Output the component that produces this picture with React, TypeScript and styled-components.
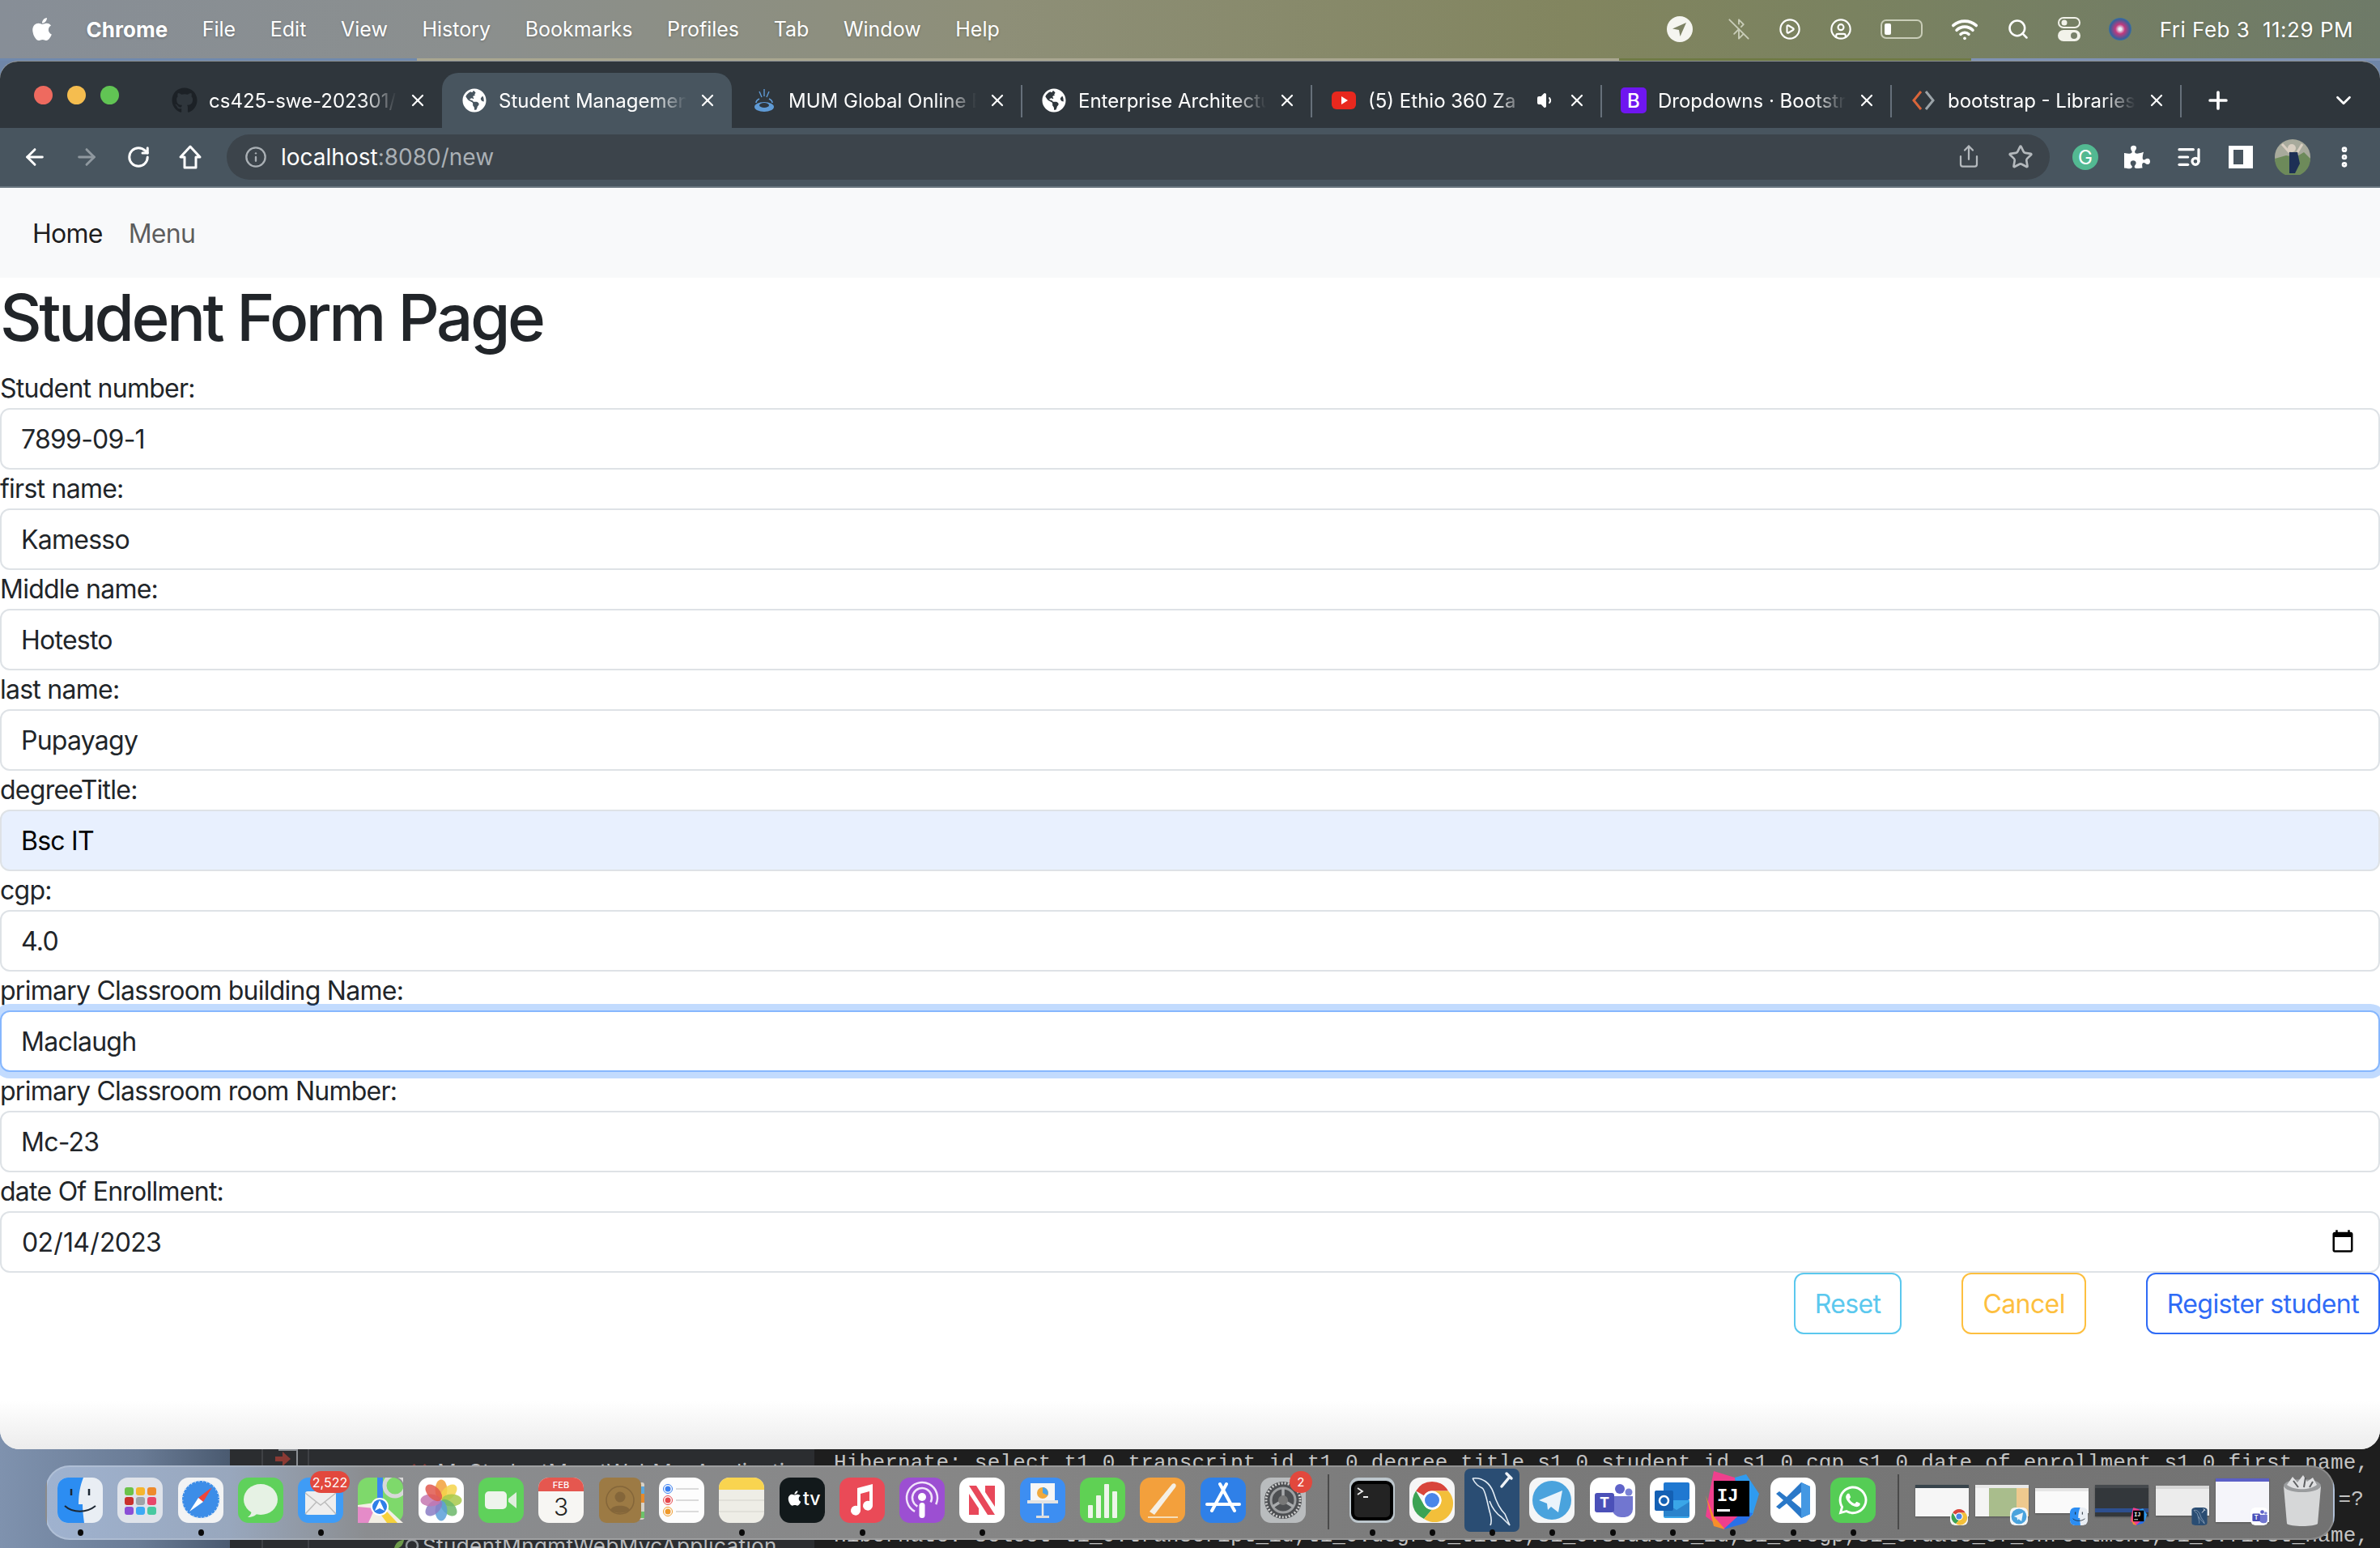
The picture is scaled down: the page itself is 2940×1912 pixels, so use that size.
import React from "react";
import styled, { createGlobalStyle } from "styled-components";
import {
  ArrowLeft,
  ArrowRight,
  BluetoothOff,
  ChevronDown,
  CirclePlay,
  CircleUser,
  Info,
  ListMusic,
  MoreVertical,
  Plus,
  RotateCw,
  Search,
  Share,
  Star,
  Volume1,
  Wifi,
  X,
} from "lucide-react";
import { FaApple, FaGithub, FaGlobeAmericas, FaPuzzlePiece, FaWhatsapp } from "react-icons/fa";

const GlobalStyle = createGlobalStyle`
  html, body { margin: 0; padding: 0; background: #6f86a8; }
  * { box-sizing: border-box; }
`;

const sans = `Inter, "Liberation Sans", sans-serif`;

const App = () => (
  <Screen>
    <GlobalStyle />
    <MenuBar>
      <AppleSlot><FaApple size={32} /></AppleSlot>
      <MenuItem $bold>Chrome</MenuItem>
      {["File", "Edit", "View", "History", "Bookmarks", "Profiles", "Tab", "Window", "Help"].map((m) => (
        <MenuItem key={m}>{m}</MenuItem>
      ))}
      <StatusArea>
        <LocationBadge>
          <svg width="20" height="20" viewBox="0 0 20 20"><path d="M18 2 1 9.500l8 1.500 1.500 8z" fill="#7d8264" /></svg>
        </LocationBadge>
        <BluetoothOff size={28} color="#c9cdb8" strokeWidth={1.6} />
        <CirclePlay size={28} strokeWidth={1.8} />
        <CircleUser size={28} strokeWidth={1.8} />
        <BatteryShell><BatteryLevel /></BatteryShell>
        <Wifi size={34} strokeWidth={2.6} />
        <Search size={28} strokeWidth={2.2} />
        <svg width="28" height="30" viewBox="0 0 28 30">
          <rect x="1" y="1" width="26" height="12" rx="6" fill="none" stroke="#f2f2ea" strokeWidth="2" />
          <circle cx="8" cy="7" r="3.500" fill="#f2f2ea" />
          <rect y="16" width="28" height="14" rx="7" fill="#f2f2ea" />
          <circle cx="20" cy="23" r="4" fill="#78806a" />
        </svg>
        <Siri />
        <ClockText>Fri Feb 3&nbsp;&nbsp;11:29 PM</ClockText>
      </StatusArea>
    </MenuBar>
    <WallpaperSliver />
    <BrowserWindow>
      <TabStrip>
        <Lights>
          <Light $c="#ee6a5f" />
          <Light $c="#f5bd4f" />
          <Light $c="#61c454" />
        </Lights>
        {tabs.map((t, i) => (
          <Tab key={t.title} $active={i === 1} $sep={i > 1}>
            <Favicon>{t.icon}</Favicon>
            <TabTitle>{t.title}</TabTitle>
            {t.audio && <Volume1 size={24} fill="#fff" color="#fff" />}
            <X size={24} color="#fff" strokeWidth={2.2} />
          </Tab>
        ))}
        <NewTab><Plus size={34} strokeWidth={2.6} /></NewTab>
        <TabListButton><ChevronDown size={30} strokeWidth={2.2} /></TabListButton>
      </TabStrip>
      <Toolbar>
        <ToolButton><ArrowLeft size={32} strokeWidth={2.2} /></ToolButton>
        <ToolButton $dim><ArrowRight size={32} strokeWidth={2.2} /></ToolButton>
        <ToolButton><RotateCw size={30} strokeWidth={2.4} /></ToolButton>
        <ToolButton>
          <svg width="30" height="32" viewBox="0 0 30 32" fill="none" stroke="#fff" strokeWidth="3">
            <path d="M15 3 3 16h5v13h14V16h5z" strokeLinejoin="round" />
          </svg>
        </ToolButton>
        <Omnibox>
          <Info size={28} color="#aab0b5" strokeWidth={2} />
          <UrlText>localhost<UrlRest>:8080/new</UrlRest></UrlText>
          <OmniActions>
            <OmniAction><Share size={30} strokeWidth={1.8} /></OmniAction>
            <OmniAction><Star size={32} strokeWidth={2} /></OmniAction>
          </OmniActions>
        </Omnibox>
        <ToolButton>
          <GrammarlyBadge>G</GrammarlyBadge>
        </ToolButton>
        <ToolButton><FaPuzzlePiece size={32} /></ToolButton>
        <ToolButton><ListMusic size={32} strokeWidth={2.4} /></ToolButton>
        <ToolButton><SidePanelIcon /></ToolButton>
        <ToolButton>
          <svg width="44" height="44" viewBox="0 0 44 44">
            <circle cx="22" cy="22" r="22" fill="#a8aa9c" />
            <path d="M0 24a22 22 0 0 0 44 0l-8-8-10 6-12-2z" fill="#6d8a5a" />
            <path d="M18 16h10l3 14-6 12h-7z" fill="#1d2f55" />
            <circle cx="21" cy="11" r="5" fill="#d9cfc2" />
            <path d="M18 16 9 6M28 16l6-10" stroke="#d9cfc2" strokeWidth="3" />
          </svg>
        </ToolButton>
        <ToolButton><MoreVertical size={32} strokeWidth={3} /></ToolButton>
      </Toolbar>
      <Page>
        <NavBar>
          <NavLink $active>Home</NavLink>
          <NavLink>Menu</NavLink>
        </NavBar>
        <Heading>Student Form Page</Heading>
        <form>
          {fields.map((f) => (
            <div key={f.label}>
              <FieldLabel>{f.label}</FieldLabel>
              <FieldInput
                type={f.type ?? "text"}
                defaultValue={f.value}
                $autofill={f.autofill}
                $focused={f.focused}
              />
            </div>
          ))}
          <ButtonRow>
            <OutlineButton type="button" $c="#5bc8ee">Reset</OutlineButton>
            <OutlineButton type="button" $c="#fdbf3f">Cancel</OutlineButton>
            <OutlineButton type="button" $c="#2f6bf6">Register student</OutlineButton>
          </ButtonRow>
        </form>
      </Page>
    </BrowserWindow>
    <Desktop>
      <WallpaperPanel />
      <IdePanel>
        <IdeGutter />
        <IdeGutter $wide>
          <svg width="32" height="44" viewBox="0 0 32 44" fill="none">
            <path d="M6 1h23v42H6" stroke="#8b8f94" strokeWidth="2" />
            <path d="M2 9h9V3l10 9-10 9v-6H2z" fill="#8a3a34" />
          </svg>
        </IdeGutter>
        <IdeTree>
          <IdeRow $top><RedCross>✗</RedCross>MyStudentMgmtWebMvcApplication</IdeRow>
          <IdeRow>
            <svg width="32" height="22" viewBox="0 0 32 22" fill="none">
              <path d="M1 14c2-8 8-10 12-10-1 6-5 12-12 10z" fill="#6d9a4a" />
              <circle cx="23" cy="11" r="7" stroke="#8f9498" strokeWidth="2.500" />
            </svg>
            StudentMngmtWebMvcApplication
          </IdeRow>
        </IdeTree>
      </IdePanel>
      <Terminal>
        <TerminalLine>{sqlLine}</TerminalLine>
        <TerminalLine $right>=?</TerminalLine>
        <TerminalLine>{sqlLine}</TerminalLine>
      </Terminal>
    </Desktop>
    <Dock>
      {dockApps.map((a) => (
        <DockSlot key={a.name} title={a.name}>
          {a.icon}
          {a.badge && <DockBadge $wide={a.badge.length > 1}>{a.badge}</DockBadge>}
          {a.dot && <RunDot />}
        </DockSlot>
      ))}
      <DockDivider />
      {dockRunning.map((a) => (
        <DockSlot key={a.name} title={a.name}>
          {a.icon}
          <RunDot />
        </DockSlot>
      ))}
      <DockDivider />
      {thumbs.map((t) => (
        <DockSlot key={t.name} title={t.name}>
          <Thumb $bg={t.bg} $bar={t.bar} $h={t.h} />
          <ThumbBadge>{t.icon}</ThumbBadge>
        </DockSlot>
      ))}
      <DockSlot title="Trash"><TrashIcon /></DockSlot>
    </Dock>
  </Screen>
);

export default App;

/* ---- drawings ---- */

const Tile = ({ bg, children }: { bg: string; children?: React.ReactNode }) => (
  <svg width="56" height="56" viewBox="0 0 56 56">
    <rect width="56" height="56" rx="13" fill={bg} />
    {children}
  </svg>
);

const FinderIcon = () => (
  <Tile bg="#e9eef4">
    <path d="M13 0h19c-4 10-6 20-6 33h5c0 8 1 15 2 23H13A13 13 0 0 1 0 43V13A13 13 0 0 1 13 0z" fill="#2c8df2" />
    <path d="M9 35c10 9 27 9 38 0" stroke="#1c2733" strokeWidth="2" fill="none" />
    <path d="M17 14v8M39 14v8" stroke="#1c2733" strokeWidth="2.500" />
  </Tile>
);

const LaunchpadIcon = () => (
  <Tile bg="#dfe3ea">
    {["#6cc24a", "#f5b52e", "#ee8a2c", "#c9302c", "#9ea3a8", "#e8476a", "#8b4fd6", "#3da9f5", "#48c9a0"].map((c, i) => (
      <rect key={c} x={9 + (i % 3) * 14} y={12 + Math.floor(i / 3) * 12} width="11" height="10" rx="3" fill={c} />
    ))}
  </Tile>
);

const SafariIcon = () => (
  <Tile bg="#f2f3f4">
    <circle cx="28" cy="27" r="23" fill="#3c8de8" />
    <circle cx="28" cy="27" r="23" fill="none" stroke="#dfe9f5" strokeDasharray="1 4" strokeWidth="3" />
    <path d="M42 12 25 25l6 5z" fill="#f0453a" />
    <path d="M14 42l17-12-6-5z" fill="#fff" />
  </Tile>
);

const MessagesIcon = () => (
  <Tile bg="#5fd15b">
    <ellipse cx="28" cy="27" rx="21" ry="19" fill="#e6f2e4" />
    <path d="M17 40c0 4-2 7-5 9 5 0 10-2 12-5z" fill="#e6f2e4" />
  </Tile>
);

const MailIcon = () => (
  <Tile bg="#3f9cf6">
    <rect x="9" y="17" width="38" height="29" rx="3" fill="#eeeeee" />
    <path d="M9 19 28 34 47 19M9 45l14-15M47 45 33 30" stroke="#bcbcbc" strokeWidth="1.500" fill="none" />
  </Tile>
);

const MapsIcon = () => (
  <Tile bg="#7ed96b">
    <path d="M0 34 28 30 56 56H30L0 56z" fill="#f3efe5" />
    <path d="M0 36v20h13l8-18z" fill="#e58bc8" />
    <path d="M27 44l9 12h13l-13-14z" fill="#f6d23c" />
    <path d="M24 0h7v28h-7z" fill="#3a86f2" />
    <circle cx="46" cy="10" r="13" fill="none" stroke="#d8d8d8" strokeWidth="5" />
    <circle cx="27" cy="36" r="11" fill="#fff" />
    <circle cx="27" cy="36" r="9" fill="#2f7fe8" />
    <path d="M27 28l6 13-6-3-6 3z" fill="#fff" />
  </Tile>
);

const PhotosIcon = () => (
  <Tile bg="#ffffff">
    {["#f2a13a", "#f5d34a", "#a8c94a", "#6cb76a", "#5b9fd8", "#8a7cc4", "#c477b0", "#e0584e"].map((c, i) => (
      <ellipse key={c} cx="28" cy="15" rx="7.500" ry="12.500" fill={c} opacity=".85" transform={`rotate(${i * 45} 28 28)`} />
    ))}
  </Tile>
);

const FaceTimeIcon = () => (
  <Tile bg="#5fd15b">
    <rect x="8" y="17" width="27" height="22" rx="5" fill="#eef4ec" />
    <path d="M37 26l10-8v20l-10-8z" fill="#dfeedd" />
  </Tile>
);

const CalendarIcon = () => (
  <Tile bg="#f7f6f3">
    <path d="M0 17V13A13 13 0 0 1 13 0h30a13 13 0 0 1 13 13v4z" fill="#e5574f" />
    <text x="28" y="13" textAnchor="middle" fontSize="11" fontFamily={sans} fill="#fff" fontWeight="500">FEB</text>
    <text x="28" y="47" textAnchor="middle" fontSize="30" fontFamily={sans} fill="#222" fontWeight="300">3</text>
  </Tile>
);

const ContactsIcon = () => (
  <svg width="56" height="56" viewBox="0 0 56 56">
    <rect x="46" y="6" width="10" height="46" rx="3" fill="#d8d2c8" />
    <rect x="50" y="20" width="6" height="11" fill="#e58a2d" />
    <rect x="50" y="11" width="6" height="9" fill="#5ba6dd" />
    <rect x="50" y="42" width="6" height="8" fill="#6cc36a" />
    <rect width="52" height="56" rx="9" fill="#9c7a44" />
    <circle cx="26" cy="28" r="17" fill="none" stroke="#84663a" strokeWidth="1.500" />
    <circle cx="26" cy="24" r="6.500" fill="#84663a" />
    <path d="M14 40c3-7 21-7 24 0-6 5-18 5-24 0z" fill="#84663a" />
  </svg>
);

const RemindersIcon = () => (
  <Tile bg="#fdfdfd">
    {["#3a7ff0", "#e5484d", "#ef9a2b"].map((c, i) => (
      <g key={c}>
        <circle cx="11" cy={14 + i * 14} r="3.500" fill={c} />
        <circle cx="11" cy={14 + i * 14} r="5.500" fill="none" stroke={c} />
        <path d={`M21 ${14 + i * 14}h28`} stroke="#cfcfcf" strokeWidth="1.500" />
      </g>
    ))}
  </Tile>
);

const NotesIcon = () => (
  <Tile bg="#eeede6">
    <path d="M0 15V13A13 13 0 0 1 13 0h30a13 13 0 0 1 13 13v2z" fill="#f9d44f" />
    <path d="M0 28h56M0 42h56" stroke="#dddcd5" strokeWidth="1.500" />
  </Tile>
);

const TvIcon = () => (
  <Tile bg="#12191b">
    <FaApple x="8" y="15" size={21} color="#fff" />
    <text x="29" y="34" fontSize="23" fontFamily={sans} fill="#fff" fontWeight="500">tv</text>
  </Tile>
);

const MusicIcon = () => (
  <Tile bg="#ea4a57">
    <path d="M22 13 41 8v27a6 6 0 1 1-4-6V17l-11 3v21a6 6 0 1 1-4-6z" fill="#fff" />
  </Tile>
);

const PodcastsIcon = () => (
  <Tile bg="#9c4fd2">
    <circle cx="28" cy="25" r="19" fill="none" stroke="#f2e5fb" strokeWidth="2.500" strokeDasharray="88 32" transform="rotate(118 28 25)" />
    <circle cx="28" cy="25" r="12" fill="none" stroke="#f2e5fb" strokeWidth="2.500" strokeDasharray="56 20" transform="rotate(118 28 25)" />
    <circle cx="28" cy="24" r="5" fill="#fff" />
    <rect x="24.500" y="31" width="7" height="19" rx="3.500" fill="#fff" />
  </Tile>
);

const NewsIcon = () => (
  <Tile bg="#ffffff">
    <path d="M12 10h9l23 36H35zM12 20l12 18v8H12zM32 10h12v26L32 18z" fill="#e8485a" />
  </Tile>
);

const KeynoteIcon = () => (
  <Tile bg="#3d8ef2">
    <rect x="13" y="7" width="30" height="24" fill="#f6f6f6" />
    <circle cx="28" cy="19" r="7" fill="#f0a93b" />
    <path d="M28 19V12a7 7 0 0 1 6 10z" fill="#4aa3e8" />
    <rect x="9" y="28" width="38" height="4" fill="#e3e3e3" />
    <path d="M28 32v16" stroke="#eaeaea" strokeWidth="2.500" />
    <rect x="20" y="47" width="16" height="3" fill="#dcdcdc" />
  </Tile>
);

const NumbersIcon = () => (
  <Tile bg="#5fd154">
    {[[10, 34], [20, 22], [30, 8], [40, 17]].map(([x, y]) => (
      <rect key={x} x={x} y={y} width="6" height={50 - y} rx="1" fill="#eef5ea" />
    ))}
  </Tile>
);

const PagesIcon = () => (
  <Tile bg="#f3a03c">
    <path d="M12 42 40 8c3-2 6 1 4 4L18 46z" fill="#f5efe4" />
    <path d="M10 49h37" stroke="#f6ddb7" strokeWidth="2" />
  </Tile>
);

const AppStoreIcon = () => (
  <Tile bg="#2f80e8">
    <path d="M24 8l18 33M32 8 14 41M8 33h40" stroke="#fff" strokeWidth="4" strokeLinecap="round" />
  </Tile>
);

const SettingsIcon = () => (
  <Tile bg="#b9bcbe">
    <circle cx="28" cy="28" r="23" fill="#4d4f52" />
    <circle cx="28" cy="28" r="21" fill="none" stroke="#d0d0d0" strokeWidth="3" strokeDasharray="2 2" />
    <circle cx="28" cy="28" r="15" fill="none" stroke="#9ea0a2" strokeWidth="3" />
    <path d="M28 28V13M28 28l13 8M28 28l-13 8" stroke="#a9abad" strokeWidth="3.500" />
    <circle cx="28" cy="28" r="6" fill="#777" />
  </Tile>
);

const TerminalIcon = () => (
  <svg width="56" height="56" viewBox="0 0 56 56">
    <rect width="56" height="56" rx="11" fill="#bcc6cc" />
    <rect x="2" y="4" width="52" height="49" rx="9" fill="#000" />
    <rect x="6" y="8" width="44" height="41" rx="5" fill="#232323" />
    <path d="M10 13l6 4-6 4M17 24h6" stroke="#eee" strokeWidth="1.800" fill="none" />
  </svg>
);

const ChromeIcon = () => (
  <Tile bg="#f6f6f6">
    <path d="M8.100 16.500A23 23 0 0 1 48 16.500H28a11.500 11.500 0 0 0-10 5.750z" fill="#d8453b" />
    <path d="M8.100 16.500 18 33.750A11.500 11.500 0 0 0 28 39.500L18 51A23 23 0 0 1 8.100 16.500z" fill="#3ca354" />
    <path d="M48 16.500A23 23 0 0 1 18 51L28 39.500a11.500 11.500 0 0 0 10-17.250l-10-5.750z" fill="#f3bf3a" />
    <circle cx="28" cy="28" r="11.500" fill="#fff" />
    <circle cx="28" cy="28" r="9" fill="#4a86e8" />
  </Tile>
);

const MysqlIcon = () => (
  <MysqlSvg width="68" height="78" viewBox="0 0 68 78">
    <rect width="68" height="78" rx="7" fill="#2a4d73" />
    <path
      d="M10 12c12-2 22 6 26 18 3 10 8 20 14 26l6 14-10-10c-6-4-12-12-15-20M10 12c4 8 8 10 12 12s6 18 10 32c1 4 2 10 0 14"
      fill="none"
      stroke="#e4edf5"
      strokeWidth="1.600"
    />
    <path d="M46 22l10-12M52 6l6 6" stroke="#f0f3f6" strokeWidth="3.500" strokeLinecap="round" />
  </MysqlSvg>
);

const TelegramIcon = () => (
  <Tile bg="#f4f6f7">
    <circle cx="28" cy="28" r="24" fill="#4aa3dd" />
    <path d="M12 28 41 16l-5 27-9-7-4 4-1-8z" fill="#eaf4fb" />
  </Tile>
);

const TeamsIcon = () => (
  <Tile bg="#ffffff">
    <circle cx="37" cy="14" r="6" fill="#5f63c9" />
    <circle cx="48" cy="18" r="4.500" fill="#7b83d6" />
    <path d="M27 23h26v16a10 10 0 0 1-10 10h-4a12 12 0 0 1-12-12z" fill="#7176d0" />
    <rect x="6" y="19" width="24" height="24" rx="3" fill="#4b50b8" />
    <text x="18" y="37" textAnchor="middle" fontSize="18" fontWeight="700" fontFamily={sans} fill="#fff">T</text>
  </Tile>
);

const OutlookIcon = () => (
  <Tile bg="#ffffff">
    <rect x="17" y="6" width="32" height="22" rx="2" fill="#1f78d1" />
    <path d="M17 28h32v20a2 2 0 0 1-2 2H19a2 2 0 0 1-2-2z" fill="#3aa6e8" />
    <path d="M17 30l16 10 16-10v18H17z" fill="#1b5fb0" opacity=".5" />
    <rect x="6" y="16" width="23" height="25" rx="2" fill="#1460b4" />
    <circle cx="17.500" cy="28.500" r="5.500" fill="none" stroke="#fff" strokeWidth="2.500" />
  </Tile>
);

const IdeaIcon = () => (
  <IdeaSvg width="66" height="72" viewBox="0 0 66 72">
    <path d="M10 0l26 8 10 50-24 14L0 56 4 30z" fill="#ef3f8d" />
    <path d="M36 8 50 4l16 24-8 26-12 10z" fill="#2f9bf0" />
    <path d="M0 30l10 26 14 16-14-4z" fill="#f78f2b" />
    <path d="M22 72l28-8 8-12-12-2z" fill="#2970e8" />
    <rect x="10" y="12" width="44" height="44" fill="#000" />
    <text x="14" y="37" fontSize="22" fontWeight="700" fontFamily={`"Liberation Mono", monospace`} fill="#fff">IJ</text>
    <rect x="14" y="47" width="16" height="3" fill="#fff" />
  </IdeaSvg>
);

const VsCodeIcon = () => (
  <Tile bg="#ffffff">
    <path d="M38 6 20 24l-9-7-4 3 9 8-9 8 4 3 9-7 18 18 11-5V11z" fill="#2a78c8" />
    <path d="M38 6l11 5v34l-11 5z" fill="#4498e3" />
    <path d="M38 18 26 28l12 10z" fill="#fff" />
  </Tile>
);

const WhatsappIcon = () => (
  <Tile bg="#55cd55">
    <FaWhatsapp x="8" y="8" size={40} color="#fff" />
  </Tile>
);

const TrashIcon = () => (
  <TrashSvg width="50" height="64" viewBox="0 0 50 64">
    <path d="M2 14h46l-4 46c-4 4-34 4-38 0z" fill="#d6d7d8" />
    <ellipse cx="25" cy="13" rx="23" ry="8" fill="#9a9c9e" />
    <path d="M6 12l7-10 6 7 7-9 5 8 7-5 5 9c-9 7-28 7-37 0z" fill="#dfe0e2" />
    <path d="M14 7l6 8M29 3l-2 12M38 8l-4 7" stroke="#5d5f61" strokeWidth="2" />
  </TrashSvg>
);

const SidePanelIcon = () => (
  <svg width="30" height="32" viewBox="0 0 30 32">
    <rect x="0" y="2" width="30" height="28" fill="#fff" />
    <rect x="6" y="7" width="12" height="18" fill="#48555f" />
  </svg>
);

const tabs = [
  { title: "cs425-swe-202301/", icon: <FaGithub size={32} color="#1c2126" /> },
  { title: "Student Managemen", icon: <FaGlobeAmericas size={30} color="#fff" /> },
  {
    title: "MUM Global Online E",
    icon: (
      <svg width="32" height="32" viewBox="0 0 32 32" fill="none">
        <path d="M16 2v9M10 5l3 7M22 5l-3 7" stroke="#5f9bd6" strokeWidth="1.400" />
        <ellipse cx="16" cy="24" rx="12" ry="6" fill="#5f9bd6" />
        <ellipse cx="16" cy="22" rx="6" ry="3" fill="#2f363d" />
        <path d="M6 19c0-2 2-4 4-5M26 19c0-2-2-4-4-5" stroke="#5f9bd6" strokeWidth="1.600" />
      </svg>
    ),
  },
  { title: "Enterprise Architectu", icon: <FaGlobeAmericas size={30} color="#fff" /> },
  {
    title: "(5) Ethio 360 Za",
    audio: true,
    icon: (
      <svg width="32" height="32" viewBox="0 0 32 32">
        <rect x="1" y="5" width="30" height="22" rx="6" fill="#e8281e" />
        <path d="M13 11l8 5-8 5z" fill="#fff" />
      </svg>
    ),
  },
  {
    title: "Dropdowns · Bootstr",
    icon: (
      <svg width="32" height="32" viewBox="0 0 32 32">
        <rect width="32" height="32" rx="5" fill="#6f16f0" />
        <text x="16" y="25" textAnchor="middle" fontSize="24" fontFamily={sans} fontWeight="500" fill="#fff">B</text>
      </svg>
    ),
  },
  {
    title: "bootstrap - Libraries",
    icon: (
      <svg width="32" height="32" viewBox="0 0 32 32" fill="none" strokeWidth="3">
        <path d="M13 5 4 16l9 11" stroke="#d9653a" />
        <path d="M19 5l9 11-9 11" stroke="#9ba3a8" />
      </svg>
    ),
  },
];

const fields: { label: string; value: string; type?: string; autofill?: boolean; focused?: boolean }[] = [
  { label: "Student number:", value: "7899-09-1" },
  { label: "first name:", value: "Kamesso" },
  { label: "Middle name:", value: "Hotesto" },
  { label: "last name:", value: "Pupayagy" },
  { label: "degreeTitle:", value: "Bsc IT", autofill: true },
  { label: "cgp:", value: "4.0" },
  { label: "primary Classroom building Name:", value: "Maclaugh", focused: true },
  { label: "primary Classroom room Number:", value: "Mc-23" },
  { label: "date Of Enrollment:", value: "2023-02-14", type: "date" },
];

const sqlLine =
  "Hibernate: select t1_0.transcript_id,t1_0.degree_title,s1_0.student_id,s1_0.cgp,s1_0.date_of_enrollment,s1_0.first_name,";

const dockApps: { name: string; icon: React.ReactNode; dot?: boolean; badge?: string }[] = [
  { name: "Finder", icon: <FinderIcon />, dot: true },
  { name: "Launchpad", icon: <LaunchpadIcon /> },
  { name: "Safari", icon: <SafariIcon />, dot: true },
  { name: "Messages", icon: <MessagesIcon /> },
  { name: "Mail", icon: <MailIcon />, dot: true, badge: "2,522" },
  { name: "Maps", icon: <MapsIcon /> },
  { name: "Photos", icon: <PhotosIcon /> },
  { name: "FaceTime", icon: <FaceTimeIcon /> },
  { name: "Calendar", icon: <CalendarIcon /> },
  { name: "Contacts", icon: <ContactsIcon /> },
  { name: "Reminders", icon: <RemindersIcon /> },
  { name: "Notes", icon: <NotesIcon />, dot: true },
  { name: "TV", icon: <TvIcon /> },
  { name: "Music", icon: <MusicIcon />, dot: true },
  { name: "Podcasts", icon: <PodcastsIcon /> },
  { name: "News", icon: <NewsIcon />, dot: true },
  { name: "Keynote", icon: <KeynoteIcon /> },
  { name: "Numbers", icon: <NumbersIcon /> },
  { name: "Pages", icon: <PagesIcon /> },
  { name: "App Store", icon: <AppStoreIcon /> },
  { name: "System Preferences", icon: <SettingsIcon />, badge: "2" },
];

const dockRunning = [
  { name: "Terminal", icon: <TerminalIcon /> },
  { name: "Chrome", icon: <ChromeIcon /> },
  { name: "MySQL Workbench", icon: <MysqlIcon /> },
  { name: "Telegram", icon: <TelegramIcon /> },
  { name: "Teams", icon: <TeamsIcon /> },
  { name: "Outlook", icon: <OutlookIcon /> },
  { name: "IntelliJ IDEA", icon: <IdeaIcon /> },
  { name: "VS Code", icon: <VsCodeIcon /> },
  { name: "WhatsApp", icon: <WhatsappIcon /> },
];

const thumbs = [
  { name: "Chrome window", bg: "#f6f6f6", bar: "#38444c", h: 39, icon: <ChromeIcon /> },
  { name: "Telegram window", bg: "linear-gradient(90deg, #f4f4f4 0 26%, #a9bd8c 26% 78%, #eec98e 78%)", bar: "#e8e8e8", h: 39, icon: <TelegramIcon /> },
  { name: "Finder window", bg: "#fafafa", bar: "#e6e6e6", h: 31, icon: <FinderIcon /> },
  { name: "IntelliJ window", bg: "linear-gradient(#33373b 0 72%, #2d4f8f 72% 86%, #33373b 86%)", bar: "#45494d", h: 39, icon: <IdeaIcon /> },
  { name: "Workbench window", bg: "#ececec", bar: "#d6d6d6", h: 37, icon: <MysqlIcon /> },
  { name: "Teams window", bg: "#f5f5fa", bar: "#5b5fc7", h: 54, icon: <TeamsIcon /> },
];

/* ---- screen ---- */

const Screen = styled.div`
  position: relative;
  width: 2940px;
  height: 1912px;
  overflow: hidden;
  background: #6f86a8;
  font-family: ${sans};
`;

const MenuBar = styled.header`
  display: flex;
  align-items: center;
  gap: 42.6px;
  height: 72px;
  padding: 0 33px 0 36px;
  color: #fff;
  font-size: 25px;
  background: linear-gradient(90deg, #878e97 0%, #8b8f8e 20%, #8e8f78 42%, #82855f 66%, #7a8260 78%, #6e7a68 100%);
  text-shadow: 0 1px 3px rgba(0, 0, 0, 0.25);
`;

const AppleSlot = styled.span`
  display: flex;
  width: 32px;
  margin-right: -4px;
`;

const MenuItem = styled.span<{ $bold?: boolean }>`
  font-size: ${(p) => (p.$bold ? "26px" : "25px")};
  font-weight: ${(p) => (p.$bold ? 700 : 400)};
  white-space: nowrap;
`;

const StatusArea = styled.div`
  display: flex;
  align-items: center;
  gap: 35px;
  margin-left: auto;
`;

const LocationBadge = styled.span`
  display: flex;
  align-items: center;
  justify-content: center;
  width: 32px;
  height: 32px;
  margin-right: 8px;
  border-radius: 50%;
  background: #f5f5f0;
`;

const BatteryShell = styled.span`
  display: flex;
  align-items: center;
  width: 52px;
  height: 24px;
  padding: 3px;
  border: 2px solid #c9cdb8;
  border-radius: 7px;
`;

const BatteryLevel = styled.span`
  width: 8px;
  height: 100%;
  border-radius: 2px;
  background: #fff;
`;

const Siri = styled.span`
  display: block;
  width: 28px;
  height: 28px;
  border-radius: 50%;
  background: radial-gradient(circle at 50% 50%, #e8eef5 0 8%, #c0397e 30%, #3a5f9a 62%, #3fb5b0 100%);
`;

const ClockText = styled.span`
  font-size: 26px;
  letter-spacing: 0.5px;
  white-space: nowrap;
`;

const WallpaperSliver = styled.div`
  height: 3px;
  background: linear-gradient(
    90deg,
    #7089ad 0 515px,
    #a9a690 515px 2000px,
    #6f7a45 2000px 2435px,
    #7f92b4 2435px 100%
  );
`;

const BrowserWindow = styled.main`
  position: relative;
  z-index: 1;
  display: flex;
  flex-direction: column;
  height: 1715px;
  border-top: 1px solid #8b9093;
  border-radius: 22px 22px 24px 24px;
  overflow: hidden;
  background: #fff;
`;

const TabStrip = styled.div`
  display: flex;
  align-items: flex-end;
  flex: none;
  height: 82px;
  background: #2f363c;
`;

const Lights = styled.div`
  display: flex;
  align-self: flex-start;
  gap: 18px;
  width: 188px;
  padding: 30px 0 0 42px;
`;

const Light = styled.span<{ $c: string }>`
  width: 23px;
  height: 23px;
  border-radius: 50%;
  background: ${(p) => p.$c};
`;

const Tab = styled.div<{ $active?: boolean; $sep?: boolean }>`
  position: relative;
  display: flex;
  flex: none;
  align-items: center;
  gap: 14px;
  width: 358px;
  height: 68px;
  padding: 0 18px 0 24px;
  border-radius: 20px 20px 0 0;
  color: #fff;
  font-size: 24px;
  background: ${(p) => (p.$active ? "#48555f" : "transparent")};

  &::after {
    content: "";
    display: ${(p) => (p.$sep ? "block" : "none")};
    position: absolute;
    right: -1px;
    top: 15px;
    width: 2px;
    height: 40px;
    background: #66707a;
  }
`;

const Favicon = styled.span`
  display: flex;
  align-items: center;
  justify-content: center;
  flex: none;
  width: 32px;
  height: 32px;
`;

const TabTitle = styled.span`
  flex: 1;
  min-width: 0;
  overflow: hidden;
  white-space: nowrap;
  -webkit-mask-image: linear-gradient(90deg, #000 82%, transparent 100%);
  mask-image: linear-gradient(90deg, #000 82%, transparent 100%);
`;

const NewTab = styled.span`
  display: flex;
  align-items: center;
  justify-content: center;
  align-self: center;
  width: 60px;
  margin: 14px 0 0 16px;
  color: #fff;
`;

const TabListButton = styled.span`
  display: flex;
  align-self: center;
  margin: 14px 30px 0 auto;
  color: #fff;
`;

const Toolbar = styled.div`
  display: flex;
  flex: none;
  align-items: center;
  height: 74px;
  padding: 0 12px 0 11px;
  border-bottom: 2px solid #6a7680;
  background: #48555f;
`;

const ToolButton = styled.span<{ $dim?: boolean }>`
  display: flex;
  flex: none;
  align-items: center;
  justify-content: center;
  width: 64px;
  color: ${(p) => (p.$dim ? "#8f989f" : "#fff")};
`;

const Omnibox = styled.div`
  display: flex;
  flex: 1;
  align-items: center;
  gap: 17px;
  height: 56px;
  margin: 0 12px 0 13px;
  padding: 0 16px 0 22px;
  border-radius: 28px;
  background: #3c444b;
`;

const UrlText = styled.span`
  color: #fff;
  font-size: 28px;
`;

const UrlRest = styled.span`
  color: #aab0b5;
`;

const OmniActions = styled.div`
  display: flex;
  gap: 24px;
  margin-left: auto;
`;

const OmniAction = styled.span`
  display: flex;
  justify-content: center;
  width: 40px;
  color: #b4b9bd;
`;

const GrammarlyBadge = styled.span`
  display: flex;
  align-items: center;
  justify-content: center;
  width: 32px;
  height: 32px;
  border-radius: 50%;
  color: #fff;
  font-size: 24px;
  background: #53b992;
`;

/* ---- page ---- */

const Page = styled.div`
  flex: 1;
  color: #212529;
  font-size: 32px;
  line-height: 48px;
  letter-spacing: -0.75px;
  background: linear-gradient(180deg, #fff calc(100% - 60px), #ececec 100%);
`;

const NavBar = styled.nav`
  display: flex;
  align-items: center;
  gap: 32px;
  height: 111px;
  padding: 2px 40px 0;
  background: #f8f9fa;
`;

const NavLink = styled.a<{ $active?: boolean }>`
  color: ${(p) => (p.$active ? "rgba(0, 0, 0, 0.9)" : "rgba(0, 0, 0, 0.65)")};
`;

const Heading = styled.h1`
  margin: 0 0 15px;
  font-size: 80px;
  font-weight: 500;
  line-height: 98px;
  letter-spacing: -3.5px;
`;

const FieldLabel = styled.label`
  display: block;
  height: 48px;
`;

const FieldInput = styled.input<{ $autofill?: boolean; $focused?: boolean }>`
  display: block;
  position: relative;
  z-index: ${(p) => (p.$focused ? 1 : 0)};
  width: 100%;
  height: 76px;
  padding: 12px 24px;
  border: 2px solid ${(p) => (p.$focused ? "#86b7fe" : "#dee2e6")};
  border-radius: 12px;
  outline: none;
  color: ${(p) => (p.$autofill ? "#000" : "#212529")};
  font-family: ${sans};
  font-size: 32px;
  letter-spacing: -0.75px;
  background: ${(p) => (p.$autofill ? "#e8f0fe" : "#fff")};
  box-shadow: ${(p) => (p.$focused ? "0 0 0 8px rgba(13, 110, 253, 0.25)" : "none")};

  &::-webkit-calendar-picker-indicator {
    width: 32px;
    height: 32px;
    margin-right: 4px;
    padding: 0;
  }
`;

const ButtonRow = styled.div`
  display: flex;
  justify-content: flex-end;
  gap: 74px;
`;

const OutlineButton = styled.button<{ $c: string }>`
  height: 76px;
  padding: 0 24px;
  border: 2px solid ${(p) => p.$c};
  border-radius: 12px;
  color: ${(p) => p.$c};
  font-family: ${sans};
  font-size: 32px;
  letter-spacing: -0.6px;
  background: transparent;
`;

/* ---- desktop behind the window ---- */

const Desktop = styled.div`
  display: flex;
  height: 152px;
  margin-top: -30px;
`;

const WallpaperPanel = styled.div`
  flex: none;
  width: 284px;
  background: linear-gradient(90deg, #7f92ae 0%, #6a7c96 60%, #4a5a70 100%);
`;

const IdePanel = styled.div`
  display: flex;
  flex: none;
  width: 722px;
  background: #2b2d30;
`;

const IdeGutter = styled.div<{ $wide?: boolean }>`
  flex: none;
  width: ${(p) => (p.$wide ? "57px" : "41px")};
  padding-top: 30px;
  border-right: 2px solid #3f4145;

  svg {
    display: block;
    margin-left: 13px;
  }
`;

const IdeTree = styled.div`
  flex: 1;
  padding: 35px 0 0 140px;
  color: #b8babc;
  font-size: 26px;
  letter-spacing: 0.4px;
  white-space: nowrap;

  svg {
    flex: none;
    margin-left: -36px;
    margin-right: 4px;
  }
`;

const IdeRow = styled.div<{ $top?: boolean }>`
  display: flex;
  align-items: center;
  height: 44px;
  margin-bottom: ${(p) => (p.$top ? "48px" : "0")};
`;

const RedCross = styled.span`
  margin: 0 6px 0 -20px;
  color: #8a3a34;
  font-size: 36px;
  font-weight: 700;
`;

const Terminal = styled.div`
  flex: 1;
  min-width: 0;
  padding: 25px 0 0 24px;
  overflow: hidden;
  background: #1e1e1e;
`;

const TerminalLine = styled.div<{ $right?: boolean }>`
  height: 45px;
  padding-right: ${(p) => (p.$right ? "20px" : "0")};
  color: #c4c4c4;
  font-family: "Liberation Mono", monospace;
  font-size: 26px;
  line-height: 45px;
  letter-spacing: 0.2px;
  text-align: ${(p) => (p.$right ? "right" : "left")};
  white-space: nowrap;
`;

/* ---- dock ---- */

const Dock = styled.footer`
  position: absolute;
  z-index: 2;
  left: 56px;
  right: 56px;
  bottom: 10px;
  display: flex;
  align-items: flex-start;
  gap: 18.3px;
  height: 92px;
  padding: 13px 0 0 13px;
  border: 2px solid rgba(255, 255, 255, 0.18);
  border-radius: 30px;
  background: linear-gradient(90deg, #9fb2cf 0%, #98a7bd 8%, #8b8d90 14%, #868686 40%, #7b7b7b 60%, #727272 100%);
`;

const DockSlot = styled.div`
  position: relative;
  display: flex;
  flex: none;
  align-items: center;
  justify-content: center;
  width: 56px;
  height: 56px;

  svg {
    display: block;
    flex: none;
  }
`;

const MysqlSvg = styled.svg`
  margin: 0 -6px;
`;

const IdeaSvg = styled.svg`
  margin: 0 -5px;
`;

const TrashSvg = styled.svg`
  margin-top: 2px;
`;

const RunDot = styled.span`
  position: absolute;
  left: 25px;
  bottom: -16px;
  width: 7px;
  height: 8px;
  border-radius: 50%;
  background: #0a0a0a;
`;

const DockBadge = styled.span<{ $wide?: boolean }>`
  position: absolute;
  top: -8px;
  right: -8px;
  display: flex;
  align-items: center;
  justify-content: center;
  min-width: 28px;
  height: 27px;
  padding: 0 ${(p) => (p.$wide ? "3px" : "0")};
  border-radius: 14px;
  color: #fff;
  font-size: ${(p) => (p.$wide ? "16px" : "15px")};
  background: #e2483d;
`;

const DockDivider = styled.span`
  flex: none;
  align-self: flex-start;
  width: 2px;
  height: 68px;
  margin: -4px 6px 0 9px;
  background: #4a4a4a;
`;

const Thumb = styled.span<{ $bg: string; $bar: string; $h: number }>`
  display: block;
  flex: none;
  width: 66px;
  height: ${(p) => p.$h}px;
  margin: 0 -5px;
  background: ${(p) => p.$bg};
  border-top: 4px solid ${(p) => p.$bar};
  box-shadow: 0 1px 2px rgba(0, 0, 0, 0.3);
`;

const ThumbBadge = styled.span`
  position: absolute;
  right: -4px;
  bottom: -3px;
  display: flex;
  width: 22px;
  height: 22px;
  overflow: hidden;
  border-radius: 6px;

  svg {
    width: 22px;
    height: 22px;
    margin: 0;
  }
`;
